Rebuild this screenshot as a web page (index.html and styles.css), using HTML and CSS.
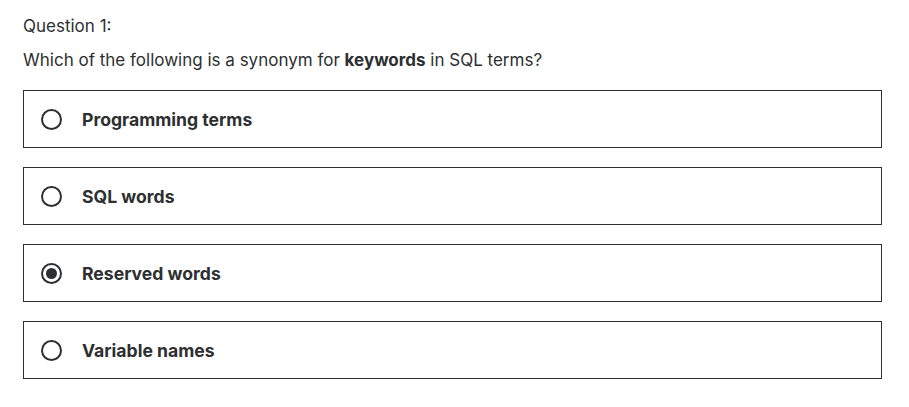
FILE: index.html
```html
<!DOCTYPE html>
<html>
<head>
<meta charset="utf-8">
<link rel="stylesheet" href="styles.css">
</head>
<body>
<div class="quiz">
  <div class="qnum">Question 1:</div>
  <div class="prompt">Which of the following is a synonym for <strong>keywords</strong> in SQL terms?</div>
  <ul class="answers">
    <li class="answer"><span class="radio"></span><span class="label">Programming terms</span></li>
    <li class="answer"><span class="radio"></span><span class="label">SQL words</span></li>
    <li class="answer"><span class="radio checked"></span><span class="label">Reserved words</span></li>
    <li class="answer"><span class="radio"></span><span class="label">Variable names</span></li>
  </ul>
</div>
</body>
</html>
```
FILE: styles.css
```css
html, body {
  margin: 0;
  padding: 0;
  background: #fff;
}
body {
  font-family: "Inter", "Liberation Sans", sans-serif;
  color: #2d2f31;
}
.quiz {
  padding: 16px 27px 0 23px;
}
.qnum {
  font-size: 17px;
  line-height: 20px;
}
.prompt {
  font-size: 17px;
  line-height: 20px;
  margin-top: 14px;
}
.prompt strong {
  font-weight: 700;
}
.answers {
  list-style: none;
  margin: 20px 0 0 0;
  padding: 0;
  display: flex;
  flex-direction: column;
  gap: 19px;
}
.answer {
  border: 1px solid #2d2f31;
  box-sizing: border-box;
  height: 58px;
  display: flex;
  align-items: center;
  padding: 0 17px;
  gap: 20px;
}
.radio {
  width: 21px;
  height: 21px;
  box-sizing: border-box;
  border: 2px solid #2d2f31;
  border-radius: 50%;
  display: flex;
  align-items: center;
  justify-content: center;
  flex: none;
}
.radio.checked::after {
  content: "";
  width: 11px;
  height: 11px;
  border-radius: 50%;
  background: #2d2f31;
}
.label {
  font-size: 17.6px;
  font-weight: 700;
}
```
